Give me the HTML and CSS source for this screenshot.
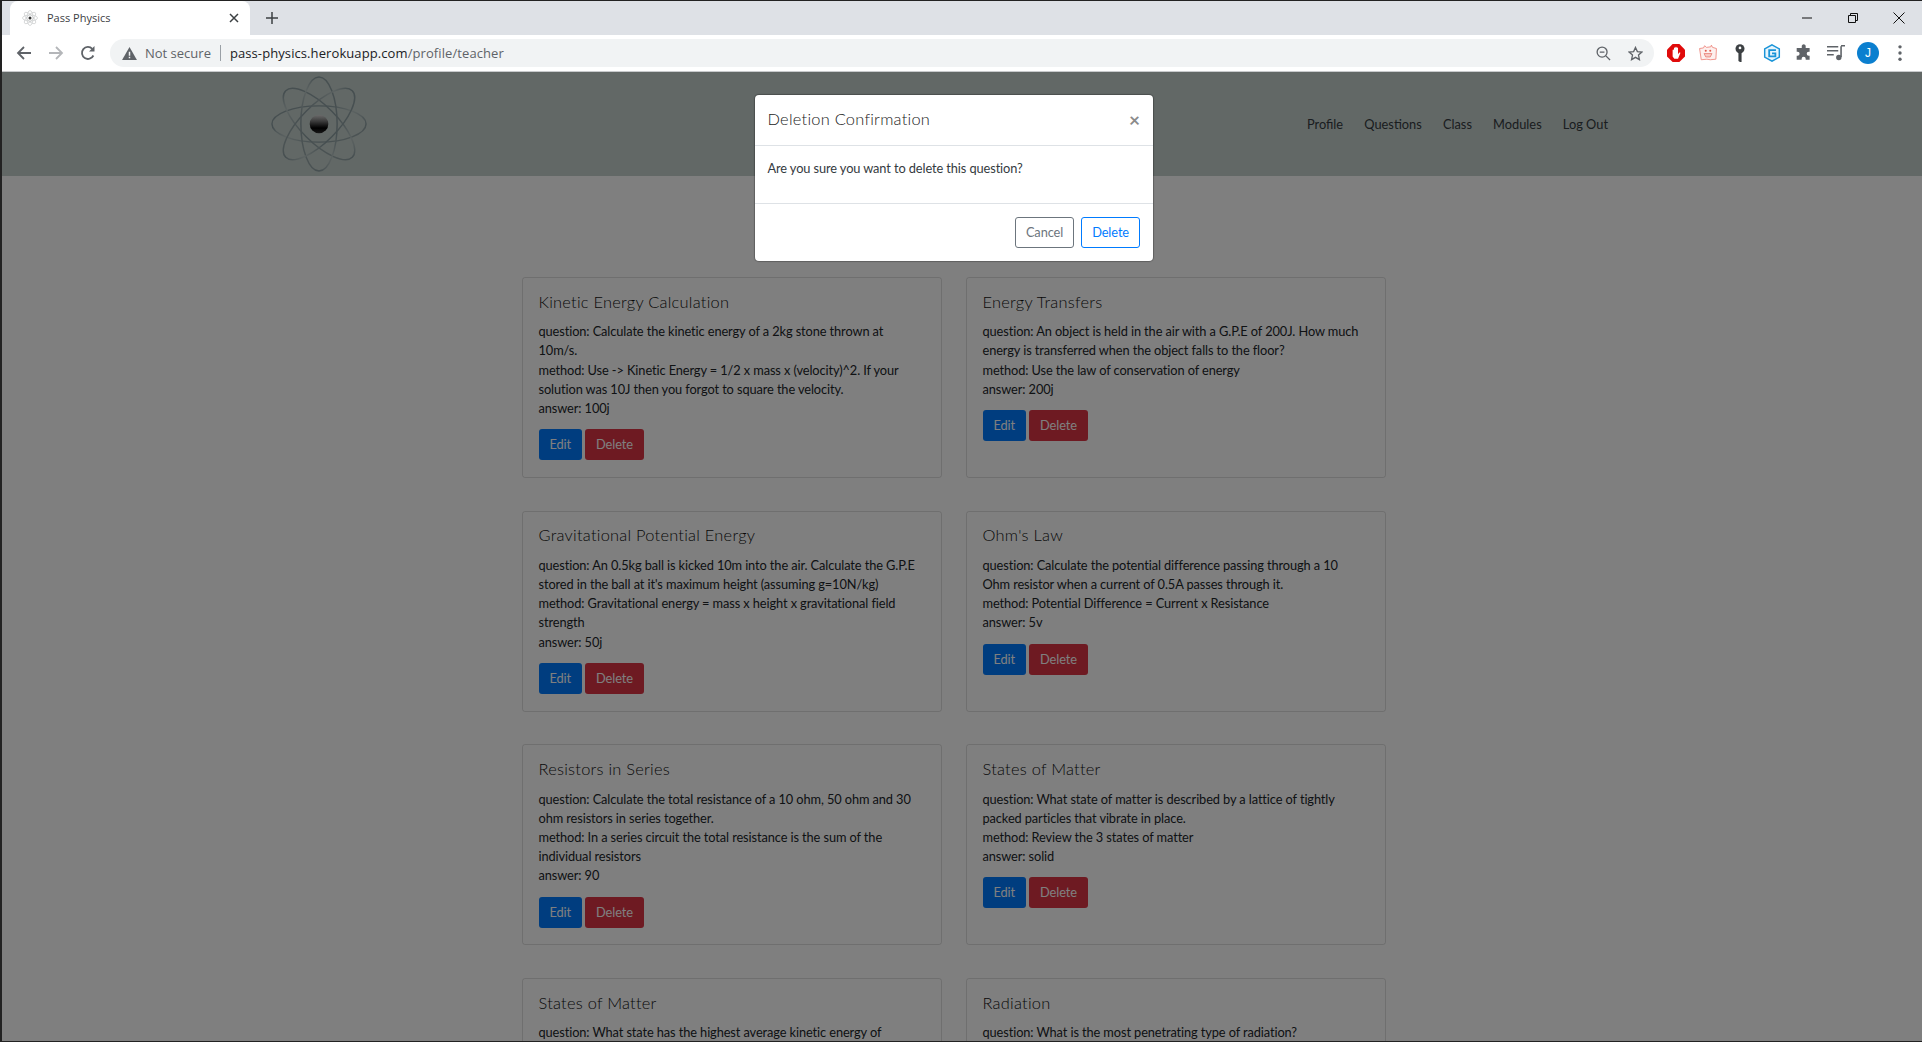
FILE: index.html
```html
<!DOCTYPE html>
<html lang="en">
<head>
<meta charset="utf-8">
<title>Pass Physics</title>
<link rel="stylesheet" href="styles.css">
</head>
<body>
<div class="window">
  <div class="tabstrip">
    <div class="tab">
      <svg class="favicon" viewBox="0 0 16 16"><g fill="none" stroke="#c9cbcc" stroke-width=".7"><ellipse cx="8" cy="8" rx="7.5" ry="3"/><ellipse cx="8" cy="8" rx="7.5" ry="3" transform="rotate(45 8 8)"/><ellipse cx="8" cy="8" rx="7.5" ry="3" transform="rotate(90 8 8)"/><ellipse cx="8" cy="8" rx="7.5" ry="3" transform="rotate(135 8 8)"/></g><circle cx="8" cy="8" r="1.5" fill="#333"/></svg>
      <span class="tab-title">Pass Physics</span>
      <svg class="tab-close" viewBox="0 0 10 10"><path d="M1 1l8 8M9 1l-8 8" stroke="#3c4043" stroke-width="1.5" fill="none"/></svg>
    </div>
    <svg class="new-tab" viewBox="0 0 12 12"><path d="M6 0v12M0 6h12" stroke="#3c4043" stroke-width="1.5" fill="none"/></svg>
    <div class="win-controls">
      <svg class="win-btn" viewBox="0 0 12 12"><path d="M1 6h10" stroke="#111" stroke-width="1" fill="none"/></svg>
      <svg class="win-btn" viewBox="0 0 12 12"><path d="M1.500 3.500h7v7h-7zM3.500 3.500v-2h7v7h-2" stroke="#111" stroke-width="1" fill="none"/></svg>
      <svg class="win-btn" viewBox="0 0 12 12"><path d="M.5.5l11 11M11.500.5l-11 11" stroke="#111" stroke-width="1" fill="none"/></svg>
    </div>
  </div>
  <div class="toolbar">
    <svg class="nav-icon" viewBox="0 0 16 16"><path d="M15 8H2M8 2L2 8l6 6" stroke="#5f6368" stroke-width="1.800" fill="none"/></svg>
    <svg class="nav-icon" viewBox="0 0 16 16"><path d="M1 8h13M8 2l6 6-6 6" stroke="#b4b6b9" stroke-width="1.800" fill="none"/></svg>
    <svg class="nav-icon" viewBox="0 0 16 16"><path d="M13.400 10.500A6 6 0 1 1 12.300 3.800" stroke="#5f6368" stroke-width="1.800" fill="none"/><path d="M14.500 1v5.500H9z" fill="#5f6368"/></svg>
    <div class="omnibox">
      <svg class="warn" viewBox="0 0 16 14"><path d="M8 0l8 14H0z" fill="#5f6368"/><path d="M7.200 5h1.600v4.500H7.200zM7.200 10.500h1.600V12H7.200z" fill="#f1f3f4"/></svg>
      <span class="not-secure">Not secure</span>
      <span class="sep"></span>
      <span class="url">pass-physics.herokuapp.com<span class="url-path">/profile/teacher</span></span>
      <svg class="omni-icon" viewBox="0 0 16 16"><circle cx="6.500" cy="6.500" r="5.300" stroke="#5f6368" stroke-width="1.400" fill="none"/><path d="M10.500 10.500L15 15M4 6.500h5" stroke="#5f6368" stroke-width="1.400" fill="none"/></svg>
      <svg class="omni-icon" viewBox="0 0 16 16"><path d="M8 1.500l2 4.500 4.800.5-3.600 3.200 1 4.800L8 12.100l-4.200 2.400 1-4.800L1.200 6.500 6 6z" stroke="#5f6368" stroke-width="1.400" fill="none"/></svg>
    </div>
    <div class="extensions">
      <svg class="ext" viewBox="0 0 16 16"><path d="M5 0h6l5 5v6l-5 5H5l-5-5V5z" fill="#e00b0b"/><path d="M5 11V5.500a.6.6 0 0 1 1.200 0V8 3.800a.6.6 0 0 1 1.200 0V8 3a.6.6 0 0 1 1.200 0V8 3.800a.6.6 0 0 1 1.200 0V9l1-1.300c.6-.6 1.400 0 1 .6L9.800 13H6.500z" fill="#fff"/></svg>
      <svg class="ext" viewBox="0 0 16 16"><path d="M.5 4l3.500-.5L5 1.500l1.500 1.500 4-.5L11 1l1 2 3.500 1L15 13.500l-5 .5-3-.5-5 .5z" fill="#fdf0ee" stroke="#ee8b82" stroke-width=".8"/><circle cx="6" cy="6" r=".9" fill="#e0574b"/><circle cx="10" cy="6" r=".9" fill="#e0574b"/><path d="M4.500 8.500h7L10 11.500H6z" fill="#f8cbc6" stroke="#e77b71" stroke-width=".7"/></svg>
      <svg class="ext" viewBox="0 0 16 16"><circle cx="8" cy="4.200" r="4" fill="#3c4043"/><circle cx="8" cy="3.500" r="1.200" fill="#fff"/><path d="M6.600 7h2.800v9H8l-1.400-1z" fill="#3c4043"/></svg>
      <svg class="ext" viewBox="0 0 16 16"><path d="M8 .7l6.500 3.700v7.200L8 15.300l-6.500-3.700V4.400z" fill="#e8f5fc" stroke="#1a94d8" stroke-width="1.300"/><path d="M11.500 5.500H5.500v5.500h5.500V8.300H8" fill="none" stroke="#1a94d8" stroke-width="1.600"/></svg>
      <svg class="ext" viewBox="0 0 16 16"><path d="M6 1.500a1.800 1.800 0 0 1 3.500 0V3.500H13v3.300h-.800a1.800 1.800 0 0 0 0 3.600h.800V14H9.500v-.8a1.800 1.800 0 0 0-3.600 0v.8H1.500v-3.500h.800a1.800 1.800 0 0 0 0-3.600h-.800V3.500H6z" fill="#5f6368"/></svg>
      <svg class="ext" viewBox="0 0 16 16"><path d="M0 2.500h10M0 6h10M0 9.500h6" stroke="#5f6368" stroke-width="1.400" fill="none"/><path d="M12.500 2v9.500M12.500 1.500H16" stroke="#5f6368" stroke-width="1.400" fill="none"/><circle cx="10.500" cy="12" r="2.400" fill="#5f6368"/></svg>
      <span class="avatar">J</span>
      <svg class="ext" viewBox="0 0 16 16"><circle cx="8" cy="2.500" r="1.500" fill="#5f6368"/><circle cx="8" cy="8" r="1.500" fill="#5f6368"/><circle cx="8" cy="13.500" r="1.500" fill="#5f6368"/></svg>
    </div>
  </div>
  <div class="viewport">
    <header class="navbar">
      <svg class="logo" viewBox="0 0 100 100">
        <defs>
          <linearGradient id="orbit" x1="0" y1="0" x2="1" y2="1">
            <stop offset="0" stop-color="#93a3a6"/>
            <stop offset=".3" stop-color="#8a9ca0"/>
            <stop offset=".5" stop-color="#b8c5c4"/>
            <stop offset=".75" stop-color="#8c9da1"/>
            <stop offset="1" stop-color="#a6b3b2"/>
          </linearGradient>
          <linearGradient id="ball" x1="0" y1="0" x2="0" y2="1">
            <stop offset="0" stop-color="#d8d8d8"/>
            <stop offset=".35" stop-color="#777"/>
            <stop offset=".72" stop-color="#000"/>
            <stop offset="1" stop-color="#333"/>
          </linearGradient>
        </defs>
        <g fill="none" stroke="url(#orbit)" stroke-width="1.500">
          <ellipse cx="50" cy="50" rx="48" ry="18.500"/>
          <ellipse cx="50" cy="50" rx="48" ry="18.500" transform="rotate(45 50 50)"/>
          <ellipse cx="50" cy="50" rx="48" ry="18.500" transform="rotate(90 50 50)"/>
          <ellipse cx="50" cy="50" rx="48" ry="18.500" transform="rotate(135 50 50)"/>
        </g>
        <circle cx="50" cy="50" r="9.500" fill="url(#ball)"/>
      </svg>
      <nav class="nav-links">
        <a>Profile</a><a>Questions</a><a>Class</a><a>Modules</a><a>Log Out</a>
      </nav>
    </header>
    <main class="cards">
      <article class="card">
        <h5 class="card-title">Kinetic Energy Calculation</h5>
        <p class="card-text">question: Calculate the kinetic energy of a 2kg stone thrown at 10m/s.<br>method: Use -&gt; Kinetic Energy = 1/2 x mass x (velocity)^2. If your solution was 10J then you forgot to square the velocity.<br>answer: 100j</p>
        <div class="actions"><a class="btn btn-primary">Edit</a><a class="btn btn-danger">Delete</a></div>
      </article>
      <article class="card">
        <h5 class="card-title">Energy Transfers</h5>
        <p class="card-text">question: An object is held in the air with a G.P.E of 200J. How much energy is transferred when the object falls to the floor?<br>method: Use the law of conservation of energy<br>answer: 200j</p>
        <div class="actions"><a class="btn btn-primary">Edit</a><a class="btn btn-danger">Delete</a></div>
      </article>
      <article class="card">
        <h5 class="card-title">Gravitational Potential Energy</h5>
        <p class="card-text">question: An 0.5kg ball is kicked 10m into the air. Calculate the G.P.E stored in the ball at it's maximum height (assuming g=10N/kg)<br>method: Gravitational energy = mass x height x gravitational field strength<br>answer: 50j</p>
        <div class="actions"><a class="btn btn-primary">Edit</a><a class="btn btn-danger">Delete</a></div>
      </article>
      <article class="card">
        <h5 class="card-title">Ohm's Law</h5>
        <p class="card-text">question: Calculate the potential difference passing through a 10<br>Ohm resistor when a current of 0.5A passes through it.<br>method: Potential Difference = Current x Resistance<br>answer: 5v</p>
        <div class="actions"><a class="btn btn-primary">Edit</a><a class="btn btn-danger">Delete</a></div>
      </article>
      <article class="card">
        <h5 class="card-title">Resistors in Series</h5>
        <p class="card-text">question: Calculate the total resistance of a 10 ohm, 50 ohm and 30 ohm resistors in series together.<br>method: In a series circuit the total resistance is the sum of the individual resistors<br>answer: 90</p>
        <div class="actions"><a class="btn btn-primary">Edit</a><a class="btn btn-danger">Delete</a></div>
      </article>
      <article class="card">
        <h5 class="card-title">States of Matter</h5>
        <p class="card-text">question: What state of matter is described by a lattice of tightly packed particles that vibrate in place.<br>method: Review the 3 states of matter<br>answer: solid</p>
        <div class="actions"><a class="btn btn-primary">Edit</a><a class="btn btn-danger">Delete</a></div>
      </article>
      <article class="card">
        <h5 class="card-title">States of Matter</h5>
        <p class="card-text">question: What state has the highest average kinetic energy of</p>
      </article>
      <article class="card">
        <h5 class="card-title">Radiation</h5>
        <p class="card-text">question: What is the most penetrating type of radiation?</p>
      </article>
    </main>
    <div class="backdrop"></div>
    <div class="modal">
      <div class="modal-header">
        <h5 class="modal-title">Deletion Confirmation</h5>
        <span class="modal-close">×</span>
      </div>
      <div class="modal-body">Are you sure you want to delete this question?</div>
      <div class="modal-footer">
        <a class="btn btn-outline-secondary">Cancel</a>
        <a class="btn btn-outline-primary">Delete</a>
      </div>
    </div>
  </div>
</div>
</body>
</html>
```

FILE: styles.css
```css
* { box-sizing: border-box; }
html, body { margin: 0; height: 100%; overflow: hidden; background: #000; }
.window {
  width: 1922px; height: 1042px;
  display: flex; flex-direction: column;
  padding: 1px 0 1px 2px;
  overflow: hidden;
  background: #222;
}
.tabstrip {
  height: 34px; flex: none;
  display: flex; align-items: center;
  background: #dee1e6;
  padding-left: 8px;
  font-family: "Open Sans", sans-serif;
}
.tab {
  width: 240px; height: 34px;
  background: #fff;
  border-radius: 8px 8px 0 0;
  display: flex; align-items: center;
  padding: 0 11px 1px 12px;
}
.favicon { width: 16px; height: 16px; margin-right: 9px; }
.tab-title { font-size: 11px; color: #3c4043; flex: 1; }
.tab-close { width: 10px; height: 10px; }
.new-tab { width: 12px; height: 12px; margin-left: 16px; }
.win-controls { margin-left: auto; display: flex; gap: 34px; padding-right: 17px; align-items: center; }
.win-btn { width: 12px; height: 12px; }
.toolbar {
  height: 37px; flex: none;
  display: flex; align-items: center;
  background: #fff;
  border-bottom: 1px solid #c8cacc;
  padding-left: 14px;
  font-family: "Open Sans", sans-serif;
  gap: 16px;
}
.nav-icon { width: 16px; height: 16px; }
.omnibox {
  width: 1544px; height: 28px;
  margin-left: -2px;
  background: #f1f3f4;
  border-radius: 14px;
  display: flex; align-items: center;
  padding: 0 11px 0 12px;
  font-size: 13px;
}
.warn { width: 15px; height: 13px; margin-right: 8px; }
.not-secure { color: #5f6368; }
.sep { width: 1px; height: 16px; background: #9aa0a6; margin: 0 9px; }
.url { color: #202124; flex: 1; letter-spacing: .09px; }
.url-path { color: #5f6368; }
.omni-icon { width: 15px; height: 15px; margin-left: 17px; }
.extensions { display: flex; align-items: center; gap: 14px; margin-left: -3px; }
.ext { width: 18px; height: 18px; }
.avatar {
  width: 22px; height: 22px; margin: 0 -2px;
  border-radius: 50%;
  background: #0b7fcf; color: #fff;
  display: flex; align-items: center; justify-content: center;
  font-family: "Liberation Sans", sans-serif;
  font-size: 12px;
}
.viewport {
  flex: 1; position: relative; overflow: hidden;
  background: #fff;
  font-family: Lato, sans-serif;
  font-size: 12.8px; line-height: 19.2px; letter-spacing: -.1px; color: #212529;
}
.navbar {
  height: 104px;
  background: #c4d0cc;
  display: flex; align-items: center; justify-content: space-between;
  padding: 0 314px 0 268px;
}
.logo { width: 98px; height: 98px; }
.nav-links { display: flex; gap: 21.2px; padding-top: 2px; color: #343a40; letter-spacing: 0; }
.cards {
  width: 865px;
  margin: 101px 0 0 519.5px;
  display: grid;
  grid-template-columns: 420px 420px;
  column-gap: 24px;
  row-gap: 32.67px;
}
.card {
  height: 201px;
  border: 1px solid rgba(0,0,0,.125);
  border-radius: 3px;
  padding: 14.6px 16px 0;
}
.card-title, .modal-title {
  font-family: Lato, sans-serif;
  font-weight: 300;
  font-size: 16.4px; line-height: 18px;
  letter-spacing: .25px;
  margin: 0;
  color: #111;
}
.card-text { margin: 11.6px 0 11px; }
.actions { display: flex; gap: 3px; }
.btn {
  display: block;
  padding: 5px 10px;
  border: 1px solid transparent;
  border-radius: 3px;
  font-size: 12.8px; line-height: 19px;
  white-space: nowrap;
}
.btn-primary { background: #007bff; color: #fff; }
.btn-danger { background: #dc3545; color: #fff; }
.btn-outline-secondary { border-color: #6c757d; color: #6c757d; }
.btn-outline-primary { border-color: #007bff; color: #007bff; }
.backdrop { position: absolute; inset: 0; background: rgba(0,0,0,.5); }
.modal {
  position: absolute; left: 753px; top: 23px;
  width: 398px; height: 166px;
  background: #fff;
  border-radius: 4px;
  box-shadow: 0 0 1px 1px rgba(0,0,0,.25);
  display: flex; flex-direction: column;
}
.modal-header {
  height: 51px; flex: none;
  display: flex; align-items: center; justify-content: space-between;
  padding: 0 13px 3px 12.5px;
  border-bottom: 1px solid #dee2e6;
}
.modal-title { color: #222; }
.modal-close { font-size: 19px; font-weight: 700; color: #8a8a8a; padding-top: 3px; }
.modal-body { flex: 1; padding: 13px 12.5px; color: #343a40; }
.modal-footer {
  height: 58px; flex: none;
  display: flex; align-items: center; justify-content: flex-end; gap: 7px;
  padding: 0 13px;
  border-top: 1px solid #dee2e6;
}
```
